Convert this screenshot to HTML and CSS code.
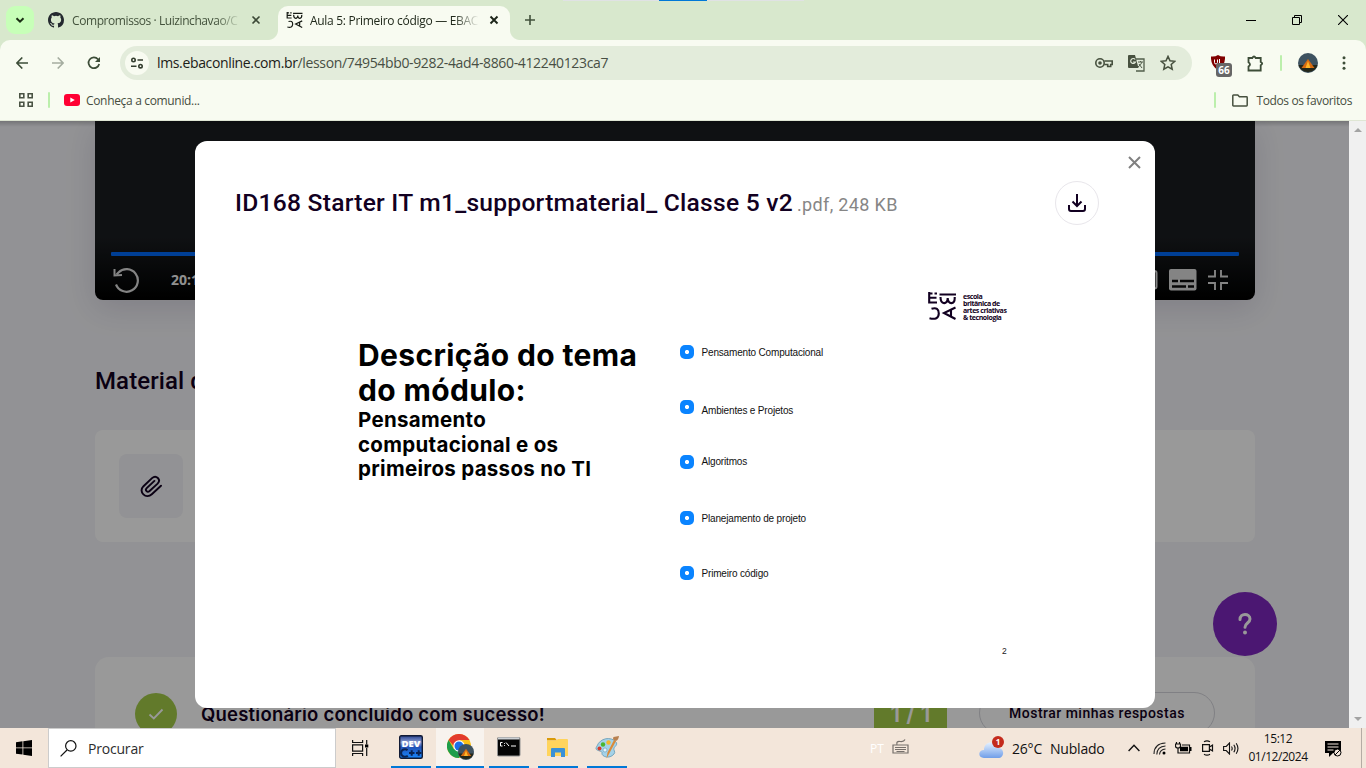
FILE: index.html
```html
<!DOCTYPE html>
<html lang="pt-BR">
<head>
<meta charset="utf-8">
<title>Aula 5: Primeiro código — EBAC</title>
<link rel="stylesheet" href="styles.css">
</head>
<body>
<svg class="defs" width="0" height="0" aria-hidden="true">
  <symbol id="ebac" viewBox="0 0 28 28">
    <g fill="none" stroke="currentColor" stroke-width="2.100">
      <path d="M1.200 0v11.500M1 1.500h3.500M6.500 1.500h2.500M1 5.800h7.500M1 10.500h8"/>
      <path d="M11.500 2.500h16.500M12.500 5c0 8 7.200 8 7.200 1c0 7 7.500 7 7-1"/>
      <path d="M3.500 16.700Q10.800 14.500 10.800 21.500Q10.500 28.500 1.500 26.300"/>
      <path d="M27.500 15.500L16 21l11.500 6M23 17.500v7"/>
    </g>
  </symbol>
  <symbol id="tent" viewBox="0 0 20 20">
    <circle cx="10" cy="10" r="10" fill="#3e5260"/>
    <path d="M.5 12a10 10 0 0 0 19 0z" fill="#242719"/>
    <path d="M10 6l6.500 9h-13z" fill="#d76b12"/><path d="M10 8l2.500 7h-5z" fill="#ffb628"/>
  </symbol>
</svg>
<div class="screen">
  <header class="chrome">
    <div class="strip">
      <div class="tab-search"><svg width="10" height="7" viewBox="0 0 10 7"><path d="M1.500 1.200L5 4.700l3.500-3.500" fill="none" stroke="#1a2e13" stroke-width="2"/></svg></div>
      <div class="tab tab-idle">
        <svg width="16" height="16" viewBox="0 0 16 16"><path fill="#24292f" d="M8 0C3.580 0 0 3.580 0 8c0 3.540 2.290 6.530 5.470 7.590.4.070.55-.17.55-.38v-1.490c-2.010.37-2.530-.49-2.690-.94-.09-.23-.48-.94-.82-1.130-.28-.15-.68-.52-.01-.53.63-.01 1.080.58 1.230.82.72 1.210 1.870.87 2.330.66.07-.52.28-.87.51-1.070-1.780-.2-3.640-.89-3.640-3.950 0-.87.31-1.590.82-2.150-.08-.2-.36-1.020.08-2.120 0 0 .67-.21 2.200.82a7.600 7.600 0 0 1 4 0c1.530-1.040 2.200-.82 2.200-.82.44 1.100.16 1.920.08 2.120.51.56.82 1.270.82 2.150 0 3.070-1.870 3.750-3.650 3.950.29.25.54.73.54 1.480v2.200c0 .21.15.46.55.38A8 8 0 0 0 16 8c0-4.420-3.580-8-8-8z"/></svg>
        <span class="tab-title t-github">Compromissos · Luizinchavao/C</span>
        <svg class="x" width="10" height="10" viewBox="0 0 10 10"><path d="M1.500 1.500l7 7m0-7l-7 7" stroke="#3c4a37" stroke-width="1.600"/></svg>
      </div>
      <div class="tab tab-on">
        <svg class="ebac-tab" width="17" height="16"><use href="#ebac"/></svg>
        <span class="tab-title t-aula">Aula 5: Primeiro código — EBAC</span>
        <svg class="x" width="10" height="10" viewBox="0 0 10 10"><path d="M1.500 1.500l7 7m0-7l-7 7" stroke="#1c2419" stroke-width="1.900"/></svg>
      </div>
      <svg class="plus" width="10" height="10" viewBox="0 0 10 10"><path d="M5 0v10M0 5h10" stroke="#41513b" stroke-width="1.600"/></svg>
      <div class="snap"><i></i></div>
      <div class="winbtns">
        <svg width="10" height="10" viewBox="0 0 10 10"><path d="M0 5.500h10" stroke="#000"/></svg>
        <svg width="10" height="10" viewBox="0 0 10 10"><path d="M.5 2.500h7v7h-7zM2.500 2.500v-2h7v7h-2" fill="none" stroke="#000"/></svg>
        <svg width="10" height="10" viewBox="0 0 10 10"><path d="M0 0l10 10M10 0L0 10" stroke="#000" stroke-width="1.100"/></svg>
      </div>
    </div>
    <div class="toolbar">
      <div class="nav">
        <svg width="12" height="12" viewBox="0 0 12 12"><path d="M12 6H1M6.300.5L.9 6l5.400 5.500" fill="none" stroke="#3d4d38" stroke-width="1.600"/></svg>
        <svg width="12" height="12" viewBox="0 0 12 12"><path d="M0 6h11M5.700.5L11.100 6l-5.400 5.500" fill="none" stroke="#a5ada0" stroke-width="1.600"/></svg>
        <svg width="14" height="14" viewBox="0 0 14 14"><path d="M12.200 8A5.400 5.400 0 1 1 11 3.200L12.500 5" fill="none" stroke="#3d4d38" stroke-width="1.700"/><path d="M13 1v5H8z" fill="#3d4d38"/></svg>
      </div>
      <div class="omnibox">
        <div class="site"><svg width="12" height="12" viewBox="0 0 12 12"><g fill="none" stroke="#333d2e" stroke-width="1.600"><circle cx="2.500" cy="3" r="1.700"/><path d="M6.500 3H12M0 9.200h5.500"/><circle cx="9.500" cy="9.200" r="1.700"/></g></svg></div>
        <span class="url"><b>lms.ebaconline.com.br</b>/lesson/74954bb0-9282-4ad4-8860-412240123ca7</span>
        <div class="omni-icons">
          <svg width="18" height="12" viewBox="0 0 18 12"><g fill="none" stroke="#47513f" stroke-width="1.600"><path d="M9.300 4h7.900v3.500h-1.500v2h-3v-2H9.300"/><circle cx="5" cy="6" r="4.200"/></g><circle cx="5" cy="6" r="1.800" fill="#47513f"/></svg>
          <svg width="17" height="17" viewBox="0 0 17 17"><path d="M7 4h9v12H8" fill="none" stroke="#525d4b" stroke-width="1.300"/><path d="M1 0h6l3.500 13H1q-1 0-1-1V1q0-1 1-1z" fill="#47513f"/><path d="M7.200 4.500A2.500 2.500 0 1 0 7.500 7H5" fill="none" stroke="#e3ecdb" stroke-width="1.200"/><path d="M10 7h5M12.500 6v1M14 7q-1 3-4 5M11 9l3 4" fill="none" stroke="#525d4b"/></svg>
          <svg width="16" height="16" viewBox="0 0 16 16"><path d="M8 1.400l2 4.400 4.800.5-3.600 3.200 1 4.700L8 11.800l-4.200 2.400 1-4.700L1.200 6.300 6 5.800z" fill="none" stroke="#47513f" stroke-width="1.500"/></svg>
        </div>
      </div>
      <div class="ublock"><svg width="14" height="15" viewBox="0 0 14 15"><path d="M7 0q3 2 7 1.500Q14.500 11 7 15-.5 11 0 1.500 4 2 7 0z" fill="#800000"/><path d="M3.500 4.500v3q0 1.500 1.500 1.500t1.500-1.500v-3M8.500 4v5" fill="none" stroke="#fff"/></svg><span>66</span></div>
      <svg class="puzzle" width="17" height="17" viewBox="0 0 17 17"><path d="M1.500 3H5.300Q7 0 8.700 3h5v4q3 1.500 0 3.200v5.300H1.500v-4q3-2 0-4.200z" fill="none" stroke="#3d4d38" stroke-width="1.800"/></svg>
      <i class="bar"></i>
      <svg class="avatar" width="20" height="20"><use href="#tent"/></svg>
      <svg class="dots" width="4" height="14" viewBox="0 0 4 14" fill="#3d4d38"><circle cx="2" cy="1.700" r="1.500"/><circle cx="2" cy="7" r="1.500"/><circle cx="2" cy="12.300" r="1.500"/></svg>
    </div>
    <div class="bookmarks">
      <svg class="grid" width="14" height="14" viewBox="0 0 14 14"><path d="M.8.8h4v4h-4zM9.200.8h4v4h-4zM.8 9.200h4v4h-4zM9.200 9.200h4v4h-4z" fill="none" stroke="#4a5344" stroke-width="1.600"/></svg>
      <i class="bar"></i>
      <svg class="yt" width="16" height="12" viewBox="0 0 16 12"><rect width="16" height="12" rx="3" fill="#ff0033"/><path d="M6.300 3.500v5l4.500-2.500z" fill="#fff"/></svg>
      <span class="bm t-bm">Conheça a comunid...</span>
      <i class="bar bar-r"></i>
      <svg class="folder" width="16" height="13" viewBox="0 0 16 13"><path d="M1.500 1h4.300l1.600 1.700h7.100q.7 0 .7.700v7.900q0 .7-.7.700h-13q-.7 0-.7-.7V1.700Q.8 1 1.500 1z" fill="none" stroke="#47513f" stroke-width="1.500"/></svg>
      <span class="bm t-fav">Todos os favoritos</span>
    </div>
  </header>

  <main class="viewport">
    <div class="page">
      <section class="video">
        <div class="progress"></div>
        <div class="controls">
          <svg width="27" height="26" viewBox="0 0 27 26"><path d="M3 17.500A11.300 11.300 0 1 0 5.500 5.500L3.500 7.500" fill="none" stroke="#dcdcdc" stroke-width="2.200"/><path d="M1.500 2v6.500l7.500-.4" fill="none" stroke="#dcdcdc" stroke-width="2"/></svg>
          <span class="time">20:13</span>
          <div class="right">
            <svg width="26" height="20" viewBox="0 0 26 20"><rect x="1" y="1" width="23.500" height="17.500" rx="2" fill="none" stroke="#dcdcdc" stroke-width="2"/></svg>
            <svg width="28" height="22" viewBox="0 0 28 22"><rect width="27.500" height="21.500" rx="2" fill="#dcdcdc"/><path d="M3 12h6M11 12h14M3 17.500h14M19 17.500h6" stroke="#0a0a0b" stroke-width="2.600"/></svg>
            <svg width="20" height="20" viewBox="0 0 20 20"><path d="M7 0v6.500H0M13 0v6.500h7M0 13h7v7M20 13h-7v7" fill="none" stroke="#dcdcdc" stroke-width="1.900"/></svg>
          </div>
        </div>
      </section>
      <h2 class="material">Material de apoio</h2>
      <section class="file-card"><div class="tile"><svg width="24" height="24" viewBox="0 0 24 24"><path d="M22 11.700l-9.200 8.500c-5.700 5.300-14-2.300-8.300-8L13 4.100c4.200-3.800 9.500 1.600 5.600 5.500l-8 7.400c-2.300 2-5-.7-2.900-2.900l7.700-7.200" fill="none" stroke="#120021" stroke-width="1.900" stroke-linecap="round"/></svg></div></section>
      <section class="quiz">
        <div class="ok"><svg width="16" height="13" viewBox="0 0 16 13"><path d="M1.500 6.500l4.300 4L14.500 1.500" fill="none" stroke="#fff" stroke-width="1.800"/></svg></div>
        <span class="quiz-title">Questionário concluído com sucesso!</span>
        <span class="score">1 / 1</span>
        <span class="answers"><em>Mostrar minhas respostas</em></span>
      </section>
      <div class="help"><svg width="14" height="22" viewBox="0 0 14 22"><path d="M2 6.500C2-.3 12 .2 12 6c0 4-5 4-5 8.200" fill="none" stroke="#fff" stroke-width="3" stroke-linecap="round"/><circle cx="7" cy="19.600" r="2" fill="#fff"/></svg></div>
      <div class="overlay">
        <div class="modal">
          <svg class="close" width="13" height="13" viewBox="0 0 13 13"><path d="M1 1l11 11M12 1L1 12" stroke="#808080" stroke-width="2"/></svg>
          <div class="head">
            <h1><span class="name">ID168 Starter IT m1_supportmaterial_ Classe 5 v2</span><span class="meta">.pdf, 248 KB</span></h1>
            <div class="download"><svg width="18" height="18" viewBox="0 0 18 18"><path d="M9 0v12M4.500 7.500L9 12l4.500-4.500M1 11v4q0 2 2 2h12q2 0 2-2v-4" fill="none" stroke="#120021" stroke-width="2"/></svg></div>
          </div>
          <div class="slide">
            <div class="brand"><svg width="28" height="28"><use href="#ebac"/></svg><p><span>escola</span><span>britânica de</span><span>artes criativas</span><span>&amp; tecnologia</span></p></div>
            <div class="cols">
              <div class="topic"><p class="big">Descrição do tema</p><p class="big">do módulo:</p><p class="small">Pensamento</p><p class="small">computacional e os</p><p class="small">primeiros passos no TI</p></div>
              <ul>
                <li><i></i><span>Pensamento Computacional</span></li>
                <li><i></i><span class="low">Ambientes e Projetos</span></li>
                <li><i></i><span class="high">Algoritmos</span></li>
                <li><i></i><span>Planejamento de projeto</span></li>
                <li><i></i><span>Primeiro código</span></li>
              </ul>
            </div>
            <span class="num">2</span>
          </div>
        </div>
      </div>
    </div>
    <div class="scroll"><svg width="8" height="4" viewBox="0 0 8 4"><path d="M0 4l4-4 4 4z" fill="#a3a3a3"/></svg><svg width="8" height="4" viewBox="0 0 8 4"><path d="M0 0l4 4 4-4z" fill="#a3a3a3"/></svg></div>
    <div class="topshade"></div>
  </main>

  <footer class="taskbar">
    <div class="start"><svg width="16" height="16" viewBox="0 0 16 16"><path d="M0 2.200L6.500 1.300v6.200H0zM7.300 1.200L16 0v7.500H7.300zM0 8.300h6.500v6.200L0 13.700zM7.300 8.300H16V16l-8.700-1.300z"/></svg></div>
    <div class="search"><svg width="17" height="17" viewBox="0 0 17 17"><path d="M7 10L.6 16.400" stroke="#111" stroke-width="1.200"/><circle cx="10.800" cy="5.900" r="5.200" fill="none" stroke="#111" stroke-width="1.200"/></svg><span>Procurar</span></div>
    <div class="taskview"><svg width="17" height="16" viewBox="0 0 17 16"><path d="M.6 0v2.500h10V0M.6 16v-2.500h10V16M.6 4.800h10v6.400H.6zM14.700 0v4.500M14.700 8v8" fill="none" stroke="#111" stroke-width="1.200"/><path d="M13 4.500h3.300v3H13z"/></svg></div>
    <div class="apps">
      <div class="app"><svg width="24" height="24" viewBox="0 0 24 24"><defs><linearGradient id="dg" x2="0" y2="1"><stop stop-color="#26418f"/><stop offset=".3" stop-color="#8fa3d8"/><stop offset=".5" stop-color="#2452b5"/><stop offset="1" stop-color="#1688ff"/></linearGradient></defs><rect x=".7" y=".7" width="22.600" height="22.600" rx="1.500" fill="url(#dg)" stroke="#111a35" stroke-width="1.400"/><text x="12" y="11.500" class="dev">DEV</text><path d="M8.500 15.200Q7 13.800 4.500 14.500Q2 15.500 2 18.200Q2.500 22 6 21.800Q8 21.600 8.800 20.800M10 18h5.500M12.700 15.200v5.600M17 18h5.500M19.700 15.200v5.600" fill="none" stroke="#0a2454" stroke-width="2"/></svg></div>
      <div class="app on"><svg width="27" height="27" viewBox="0 0 27 27"><circle cx="12" cy="12" r="12" fill="#fbc116"/><path d="M1.600 6A12 12 0 0 1 22.400 6H12v12z" fill="#e33b2e"/><path d="M1.600 6A12 12 0 0 0 12 24l5.200-9H12L6.800 15z" fill="#1e9e4a"/><circle cx="12" cy="12" r="5.700" fill="#fff"/><circle cx="12" cy="12" r="4.500" fill="#1a6fe8"/><svg x="11" y="10" width="16" height="16" viewBox="0 0 20 20"><use href="#tent" width="20" height="20"/></svg></svg></div>
      <div class="app"><svg width="24" height="20" viewBox="0 0 24 20"><rect x=".5" y=".5" width="22.500" height="18.500" rx="1" fill="#050505" stroke="#929292"/><path d="M1 1.500h21.500" stroke="#ccd0d4" stroke-width="2"/><path d="M5.500 5.500H3.500v3.500h2M7.500 6v.8M7.500 8v.8M9 5.500l3 3.500M14 9h5" stroke="#fff" fill="none"/></svg></div>
      <div class="app"><svg width="22" height="19" viewBox="0 0 22 19"><path d="M0 0h8l2 2.500H0z" fill="#d99a0b"/><path d="M0 2.500h9L11 1h9q1 0 1 1v16H0z" fill="#ffd45c"/><path d="M4 19v-8q0-1 1-1h12q1 0 1 1v8h-4v-4.500H8V19z" fill="#3a91d6"/></svg></div>
      <div class="app"><svg width="24" height="24" viewBox="0 0 24 24"><path d="M2 11C5 3 16 1 21 7c2 3-1 4-2 6s2 4 0 6c-5 6-13 2-12-1 .8-2-5-2-6-4q-.3-1 1-3z" fill="#a4d2e8" stroke="#6599b4" stroke-width=".8"/><circle cx="4.500" cy="13.500" r="2" fill="#d43b2b"/><circle cx="8" cy="9.500" r="2.200" fill="#4ab52e"/><circle cx="13.500" cy="7.500" r="2.200" fill="#f6b72c"/><circle cx="10" cy="15" r="2" fill="#e5f4fb" stroke="#6599b4" stroke-width=".6"/><path d="M11.500 23.500l1-6L19 5l2 1-7 13z" fill="#db8a37"/><path d="M18.500 5q-1-2 0-3l5.500-1q-.5 4-3 5z" fill="#b88150"/></svg></div>
    </div>
    <div class="tray">
      <span class="lang">PT</span>
      <svg class="kbd" width="17" height="16" viewBox="0 0 17 16"><path d="M1 6h15v8H1zM3 8.500h11M3 10.500h11M4.500 12.500h8M5 5.500Q4 2 8 2.500q4 .5 5-2" fill="none" stroke="#76706b" stroke-width="1.200"/></svg>
      <div class="weather"><svg width="25" height="20" viewBox="0 0 25 20"><defs><linearGradient id="cl" x2="0" y2="1"><stop stop-color="#e3f0ff"/><stop offset="1" stop-color="#709ee8"/></linearGradient></defs><path d="M5 19C-1.500 19-1 11 5 11 5 2 16 1 18 9c8-1 8 10 1 10z" fill="url(#cl)"/></svg><b>1</b></div>
      <span class="temp">26°C</span><span class="sky">Nublado</span>
      <svg class="chev" width="12" height="8" viewBox="0 0 12 8"><path d="M.6 7L6 1.300 11.400 7" fill="none" stroke="#111" stroke-width="1.400"/></svg>
      <svg class="wifi" width="13" height="13" viewBox="0 0 13 13"><path d="M1 12Q1 1.500 12.500 1M3.800 12.500Q4 4.500 12.500 4M6.500 12.500Q7 7.500 12.500 7" fill="none" stroke="#222" stroke-width="1.100"/><circle cx="11" cy="11" r="1.500"/></svg>
      <svg class="batt" width="17" height="12" viewBox="0 0 17 12"><path d="M1.500 0v2M4.500 0v2M.5 2h5v2q0 2-2.500 2T.5 4zM3 6v5h11.500V3H7" fill="none" stroke="#111" stroke-width="1.200"/><path d="M5 4.800h8v4.500H5zM15 5h1.500v4H15z"/></svg>
      <svg class="meet" width="13" height="16" viewBox="0 0 13 16"><path d="M1.600 4.600h6.800v6.800H1.600zM8.500 7L11.500 5v6l-3-2M3 1.800Q6-.2 9 1.800M3 14.200q3 2 6 0" fill="none" stroke="#111" stroke-width="1.200"/></svg>
      <svg class="vol" width="17" height="13" viewBox="0 0 17 13"><path d="M.6 4.500h2.600L6.500 1v11L3.200 8.500H.6zM8.500 4.500q1.400 2 0 4M10.800 2.800q2.500 3.700 0 7.400M13.200 1.200q3.500 5.300 0 10.600" fill="none" stroke="#111" stroke-width="1.100"/></svg>
      <div class="clock"><span class="hh">15:12</span><span class="dd">01/12/2024</span></div>
      <svg class="notif" width="17" height="17" viewBox="0 0 17 17"><path d="M0 1h16v12H8l-4 4v-4H0z"/><path d="M2.500 4h11M2.500 7h11M2.500 10h6" stroke="#f5e7dc"/><circle cx="12.500" cy="12.500" r="3.500" fill="#f5e7dc" stroke="#000"/><path d="M10 15l5-5" stroke="#000"/></svg>
      <i class="peek"></i>
    </div>
  </footer>
</div>
</body>
</html>
```
FILE: styles.css
```css
* { box-sizing: border-box; }
body, p, h1, h2, ul { margin: 0; padding: 0; }
body { overflow: hidden; font-family: "Open Sans", "Noto Sans", sans-serif; }
svg { display: block; flex: none; }
span { white-space: nowrap; }
.defs { position: absolute; }
.screen { width: 1366px; height: 768px; display: flex; flex-direction: column; overflow: hidden; }

/* browser frame */
.chrome { height: 121px; flex: none; background: #d8e8cd; }
.strip { height: 40px; display: flex; position: relative; align-items: flex-start; padding: 6px 0 0 6px; }
.tab-search { width: 28px; height: 28px; border-radius: 9px; background: #c7ffb8; display: grid; place-items: center; }
.tab { display: flex; align-items: center; height: 34px; padding: 0 11px 6px 0; font-size: 12px; }
.tab-idle { width: 230px; padding-left: 14px; margin-right: 14px; color: #43523c; }
.tab-on { width: 232px; padding-left: 8px; background: #f8fbf1; border-radius: 10px 10px 0 0; color: #20291b; position: relative; }
.tab-on::before, .tab-on::after { content: ""; position: absolute; bottom: 0; width: 10px; height: 10px; }
.tab-on::before { left: -10px; background: radial-gradient(circle at 0 0, transparent 9.5px, #f8fbf1 10.5px); }
.tab-on::after { right: -10px; background: radial-gradient(circle at 100% 0, transparent 9.5px, #f8fbf1 10.5px); }
.tab-title { width: 168px; margin-left: 8px; overflow: hidden; -webkit-mask-image: linear-gradient(90deg, #000 144px, transparent 169px); mask-image: linear-gradient(90deg, #000 144px, transparent 169px); }
.t-github { letter-spacing: -.42px; }
.t-aula { letter-spacing: -.3px; }
.tab-on .tab-title { margin-left: 7px; }
.tab .x { margin-left: auto; }
.tab-idle .x { margin-right: -8px; }
.ebac-tab { color: #161a14; }
.plus { margin: 9px 0 0 15px; }
.snap { position: absolute; top: 0; left: 563px; width: 241px; height: 1px; background: #e0e2e4; }
.snap i { display: block; width: 48px; height: 1px; margin-left: 96px; background: #0078d7; }
.winbtns { margin: 9px 18px 0 auto; display: flex; gap: 36px; }
.toolbar { height: 46px; background: #f8fbf1; border-radius: 10px 10px 0 0; display: flex; align-items: center; padding: 0 20px 0 16px; }
.nav { display: flex; align-items: center; gap: 24px; width: 104px; }
.nav svg:last-child { margin-left: -1px; }
.omnibox { width: 1072px; height: 34px; border-radius: 17px; background: #e3ecdb; display: flex; align-items: center; padding: 0 16px 0 5px; }
.site { width: 24px; height: 24px; border-radius: 12px; background: #f8fbf1; display: grid; place-items: center; }
.url { margin: 0 0 2px 8px; font-size: 14px; color: #484f44; letter-spacing: -.355px; }
.url b { font-weight: 400; color: #1b2018; }
.omni-icons { margin-left: auto; display: flex; align-items: center; gap: 15px; }
.ublock { position: relative; width: 22px; height: 24px; margin-left: 19px; padding-top: 4px; }
.ublock span { position: absolute; left: 5px; top: 12px; width: 16px; height: 14px; border-radius: 3px; background: #666; color: #fff; font-weight: 700; font-size: 10px; line-height: 14px; text-align: center; }
.puzzle { margin-left: 14px; }
.bar { width: 2px; height: 16px; background: #bcefac; border-radius: 1px; }
.toolbar .bar { margin-left: 16px; }
.avatar { margin-left: 16px; }
.dots { margin-left: auto; }
.bookmarks { height: 35px; background: #f8fbf1; border-bottom: 1px solid #dfe6d4; display: flex; align-items: center; padding: 0 14px 6px 19px; color: #464d40; font-size: 12px; }
.bookmarks .bar { margin-left: 15px; }
.yt { margin-left: 14px; }
.bm { margin: 0 0 0 6px; }
.t-bm { letter-spacing: -.33px; }
.bookmarks .bar-r { margin-left: auto; }
.folder { margin-left: 16px; }
.t-fav { margin-left: 8px; letter-spacing: -.38px; }

/* page */
.viewport { height: 607px; flex: none; display: flex; position: relative; }
.topshade { position: absolute; top: 0; left: 0; width: 1349px; height: 6px; background: linear-gradient(rgba(0,0,0,.2), transparent); pointer-events: none; }
.page { width: 1349px; height: 607px; position: relative; overflow: hidden; background: #f4f4f8; padding: 0 94px 0 95px; color: #120021; }
.scroll { width: 17px; background: #f0f0f0; display: flex; flex-direction: column; justify-content: space-between; align-items: center; padding: 7px 0; }
.video { height: 179px; border-radius: 0 0 8px 8px; background: linear-gradient(#1a1d20 0 65%, #000); padding: 131px 16px 0; box-shadow: 0 8px 32px rgba(24,4,60,.13); }
.progress { height: 4px; background: #006af8; border-radius: 1px; }
.controls { display: flex; align-items: center; padding: 11px 11px 0 2px; }
.time { margin-left: 31px; font-size: 14px; font-weight: 700; color: #f0f0f0; line-height: 26px; }
.controls .right { margin-left: auto; display: flex; align-items: center; gap: 11px; }
.material { margin-top: 67px; height: 29px; font: 500 24px/29px Roboto, sans-serif; letter-spacing: .1px; }
.file-card { margin-top: 34px; height: 112px; border-radius: 8px; background: #fff; padding: 24px; }
.tile { width: 64px; height: 64px; border-radius: 8px; background: #f4f4f8; display: grid; place-items: center; }
.quiz { margin-top: 115px; height: 150px; border-radius: 14px; background: #fff; display: flex; padding: 36px 40px 0; }
.ok { width: 42px; height: 42px; border-radius: 50%; background: #a3cc49; display: grid; place-items: center; }
.quiz-title { margin-left: 24px; width: 673px; font: 600 18.5px/42px Inter, sans-serif; letter-spacing: .22px; }
.score { width: 73px; height: 42px; background: #a3cc49; color: #fff; font: 600 23px/42px Inter, sans-serif; text-align: center; }
.answers { margin: -1px 0 0 32px; width: 236px; height: 42px; border: 1px solid #d6d6dc; border-radius: 21px; font: 500 14px/41px Roboto, sans-serif; text-align: center; }
.answers em { font-style: normal; letter-spacing: .48px; }
.help { position: absolute; left: 1213px; top: 471px; width: 64px; height: 64px; border-radius: 50%; background: #7d27be; display: grid; place-items: center; }
.overlay { position: absolute; inset: 0; background: rgba(0,0,0,.4); display: flex; align-items: flex-start; padding: 20px 0 0 195px; }
.modal { width: 960px; height: 567px; border-radius: 12px; background: #fff; padding: 15px 14px 0 40px; }
.close { margin-left: auto; }
.head { display: flex; justify-content: space-between; align-items: flex-start; height: 44px; margin-top: 12px; padding-right: 42px; }
.head h1 { font: 500 24.6px/44px Roboto, sans-serif; display: flex; width: 700px; }
.name { width: 562px; letter-spacing: .25px; }
.meta { font-size: 18px; font-weight: 400; color: #868686; line-height: 48px; letter-spacing: .35px; }
.download { width: 44px; height: 44px; border-radius: 50%; border: 1px solid #e8e6eb; display: grid; place-items: center; }
.slide { margin-top: 67px; color: #000; }
.brand { margin-left: 693px; display: flex; height: 30px; color: #120021; }
.brand p { margin: 1px 0 0 7px; font: 700 7px/7px "Open Sans", sans-serif; letter-spacing: -.43px; display: flex; flex-direction: column; }
.brand span { height: 7px; }
.cols { display: flex; margin-top: 16px; }
.topic { width: 321px; padding-left: 123px; font-family: Inter, sans-serif; font-weight: 700; white-space: nowrap; }
.big { font-size: 30px; line-height: 35px; letter-spacing: .35px; }
.small { font-size: 20.5px; line-height: 24.7px; letter-spacing: .3px; }
.cols ul { margin-left: 124px; list-style: none; font: 10px/14px "Liberation Sans", sans-serif; letter-spacing: -.17px; padding-top: 7px; display: flex; flex-direction: column; gap: 41.2px; }
.cols li { display: flex; align-items: center; gap: 7.5px; color: #111; height: 14px; }
.cols li span { padding-top: 2px; }
.cols li .low { padding-top: 7px; }
.cols li .high { padding-top: 0; }
.cols i { width: 14px; height: 14px; border-radius: 5px; background: radial-gradient(circle, #fff 1.6px, #0a84ff 2.5px); flex: none; }
.num { display: block; margin: 65px 0 0 767px; font: 8.5px/12px "Liberation Sans", sans-serif; color: #222; }

/* taskbar */
.taskbar { height: 40px; flex: none; background: #f3e6da; display: flex; color: #111; }
.start { width: 48px; display: grid; place-items: center; }
.search { width: 288px; background: #fff; border: 1px solid #ccc; display: flex; align-items: center; padding-left: 11px; font-size: 14px; gap: 11px; color: #2d2d2d; letter-spacing: -.2px; }
.taskview { width: 48px; display: grid; place-items: center; }
.apps { display: flex; padding-left: 7px; gap: 9px; }
.app { width: 40px; height: 40px; border-bottom: 2px solid #0078d7; display: grid; place-items: center; }
.app.on { width: 48px; background: #f8f3ee; margin: 0 -4px; }
.dev { font: 800 9.5px "Open Sans", sans-serif; fill: #fff; text-anchor: middle; }
.tray { margin-left: auto; display: flex; align-items: center; }
.lang { font-size: 12px; color: #fff; width: 21px; }
.kbd { margin: -2px 70px 0 1px; }
.weather { position: relative; width: 33px; height: 22px; padding-top: 2px; }
.weather b { position: absolute; left: 13px; top: -1px; width: 12px; height: 12px; border-radius: 50%; background: #c42b1c; color: #fff; font-size: 8px; line-height: 12px; text-align: center; }
.temp, .sky { font-size: 14px; letter-spacing: -.2px; }
.temp { width: 38px; }
.sky { width: 78px; }
.wifi { margin-left: 13px; }
.batt { margin-left: 9px; }
.meet { margin-left: 9px; }
.vol { margin-left: 9px; }
.clock { width: 66px; margin-left: 5px; display: flex; flex-direction: column; align-items: center; font-size: 12px; line-height: 18px; letter-spacing: -.45px; }
.notif { margin-left: 14px; }
.peek { width: 1px; height: 40px; background: #b5aca4; margin: 0 4px 0 19px; }
```
